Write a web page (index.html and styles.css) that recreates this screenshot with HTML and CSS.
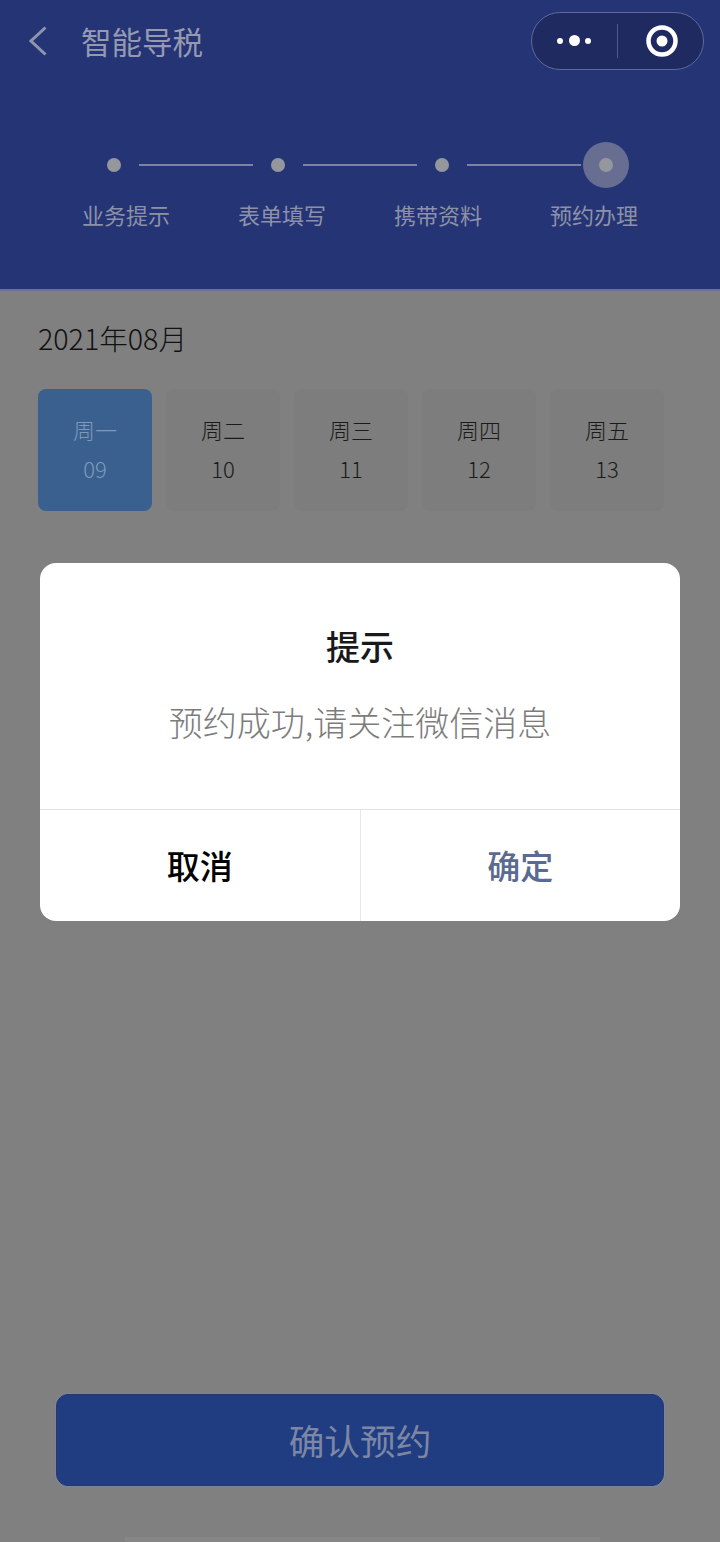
FILE: index.html
```html
<!DOCTYPE html>
<html lang="zh-CN">
<head>
    <meta charset="UTF-8">
    <meta name="viewport" content="width=device-width, initial-scale=1.0">
    <title>智能导税</title>
    <link rel="stylesheet" href="styles.css">
</head>
<body>
    <div class="page">
        <div class="header">
            <div class="nav">
                <svg class="back-icon" width="18" height="30" viewBox="0 0 18 30">
                    <path d="M16.5 1.5 L2 15 L16.5 28.5" fill="none" stroke="#8f95ad" stroke-width="3"/>
                </svg>
                <div class="nav-title">智能导税</div>
                <div class="capsule">
                    <div class="capsule-dots">
                        <span class="small-dot"></span>
                        <span class="big-dot"></span>
                        <span class="small-dot"></span>
                    </div>
                    <div class="capsule-line"></div>
                    <svg class="capsule-target" width="34" height="34" viewBox="0 0 34 34">
                        <circle cx="17" cy="17" r="13.5" fill="none" stroke="#fff" stroke-width="4.5"/>
                        <circle cx="17" cy="17" r="5.5" fill="#fff"/>
                    </svg>
                </div>
            </div>
            <div class="steps">
                <span class="step-dot"></span>
                <span class="step-line"></span>
                <span class="step-dot"></span>
                <span class="step-line"></span>
                <span class="step-dot"></span>
                <span class="step-line"></span>
                <span class="step-halo"><span class="step-dot"></span></span>
            </div>
            <div class="step-labels">
                <div class="step-label">业务提示</div>
                <div class="step-label">表单填写</div>
                <div class="step-label">携带资料</div>
                <div class="step-label">预约办理</div>
            </div>
        </div>

        <div class="content">
            <div class="month">2021年08月</div>
            <div class="days">
                <div class="day selected">
                    <div>周一</div>
                    <div>09</div>
                </div>
                <div class="day">
                    <div>周二</div>
                    <div>10</div>
                </div>
                <div class="day">
                    <div>周三</div>
                    <div>11</div>
                </div>
                <div class="day">
                    <div>周四</div>
                    <div>12</div>
                </div>
                <div class="day">
                    <div>周五</div>
                    <div>13</div>
                </div>
            </div>
            <div class="confirm-button">确认预约</div>
            <div class="home-bar"></div>
        </div>

        <div class="overlay">
            <div class="modal">
                <div class="modal-title">提示</div>
                <div class="modal-text">预约成功,请关注微信消息</div>
                <div class="modal-actions">
                    <div class="modal-btn cancel">取消</div>
                    <div class="modal-btn ok">确定</div>
                </div>
            </div>
        </div>
    </div>
</body>
</html>
```

FILE: styles.css
```css
body {
    margin: 0;
    font-family: "Noto Sans CJK SC", "Noto Sans", sans-serif;
    background-color: #818181;
}

.page {
    position: relative;
    display: flex;
    flex-direction: column;
    width: 720px;
    height: 1542px;
    overflow: hidden;
}

.header {
    height: 289px;
    flex-shrink: 0;
    background-color: #253475;
    border-bottom: 2px solid #6c7290;
}

.nav {
    display: flex;
    align-items: center;
    height: 82px;
    padding: 0 16px 0 29px;
}

.back-icon {
    margin-right: 34px;
}

.nav-title {
    flex: 1;
    font-size: 30.5px;
    line-height: 40px;
    color: #959ab0;
}

.capsule {
    display: flex;
    align-items: center;
    box-sizing: border-box;
    width: 173px;
    height: 58px;
    margin-top: -1px;
    background-color: #1f2b60;
    border: 1px solid #5d6a9c;
    border-radius: 29px;
}

.capsule-dots {
    display: flex;
    align-items: center;
    gap: 5.5px;
    width: 85px;
    padding-left: 25px;
    box-sizing: border-box;
}

.small-dot {
    width: 6px;
    height: 6px;
    border-radius: 50%;
    background-color: #fff;
}

.big-dot {
    width: 11px;
    height: 11px;
    border-radius: 50%;
    background-color: #fff;
}

.capsule-line {
    width: 1px;
    height: 34px;
    background-color: #4d5a8c;
}

.capsule-target {
    margin-left: 27px;
}

.steps {
    display: flex;
    align-items: center;
    gap: 18px;
    margin-top: 60px;
    padding-left: 107px;
}

.step-dot {
    width: 14px;
    height: 14px;
    border-radius: 50%;
    background-color: #95979f;
}

.step-halo {
    display: flex;
    align-items: center;
    justify-content: center;
    width: 46px;
    height: 46px;
    margin-left: -16px;
    border-radius: 50%;
    background-color: #686e92;
}

.step-line {
    width: 114px;
    height: 2px;
    background-color: #7c82a0;
}

.step-labels {
    display: flex;
    margin-top: 11px;
    padding-left: 48px;
}

.step-label {
    width: 156px;
    text-align: center;
    font-size: 22px;
    line-height: 30px;
    color: #8d91a7;
}

.content {
    flex: 1;
    display: flex;
    flex-direction: column;
    padding: 27px 56px 0 38px;
    background-color: #808080;
}

.month {
    font-size: 28.6px;
    line-height: 40px;
    font-weight: 300;
    color: #111;
}

.days {
    display: flex;
    gap: 14px;
    margin-top: 31px;
}

.day {
    display: flex;
    flex-direction: column;
    align-items: center;
    gap: 9px;
    flex-shrink: 0;
    width: 114px;
    height: 122px;
    padding-top: 25px;
    box-sizing: border-box;
    border-radius: 8px;
    background-color: #7d7d7d;
    font-size: 22px;
    line-height: 30px;
    font-weight: 300;
    color: #1a1a1a;
}

.day.selected {
    background-color: #3a6090;
    color: #7f9ab8;
}

.confirm-button {
    display: flex;
    align-items: center;
    justify-content: center;
    box-sizing: border-box;
    width: 608px;
    height: 92px;
    margin: auto 0 0 18px;
    padding-bottom: 2px;
    background-color: #1f3d80;
    border: 1px solid #27386b;
    border-radius: 12px;
    box-shadow: 0 0 1px 1px #7c84a4;
    font-size: 35.7px;
    color: #7d86a5;
}

.home-bar {
    width: 475px;
    height: 5px;
    margin: 51px 0 0 87px;
    background-color: #868686;
}

.overlay {
    position: absolute;
    top: 0;
    left: 0;
    right: 0;
    bottom: 0;
    display: flex;
    justify-content: center;
    align-items: flex-start;
    padding-top: 563px;
    box-sizing: border-box;
}

.modal {
    width: 640px;
    height: 358px;
    display: flex;
    flex-direction: column;
    background-color: #fff;
    border-radius: 16px;
    overflow: hidden;
    text-align: center;
}

.modal-title {
    margin-top: 59px;
    font-size: 34px;
    line-height: 48px;
    font-weight: 500;
    color: #191919;
}

.modal-text {
    margin-top: 27px;
    font-size: 34px;
    line-height: 50px;
    font-weight: 300;
    color: #7c7c7c;
}

.modal-actions {
    display: flex;
    margin-top: auto;
    height: 111px;
    border-top: 1px solid #e2e2e2;
}

.modal-btn {
    flex: 1;
    display: flex;
    align-items: center;
    justify-content: center;
    padding-bottom: 2px;
    font-size: 33px;
    font-weight: 500;
}

.cancel {
    color: #000;
    border-right: 1px solid #e8e8e8;
}

.ok {
    color: #5a6a90;
}
```
